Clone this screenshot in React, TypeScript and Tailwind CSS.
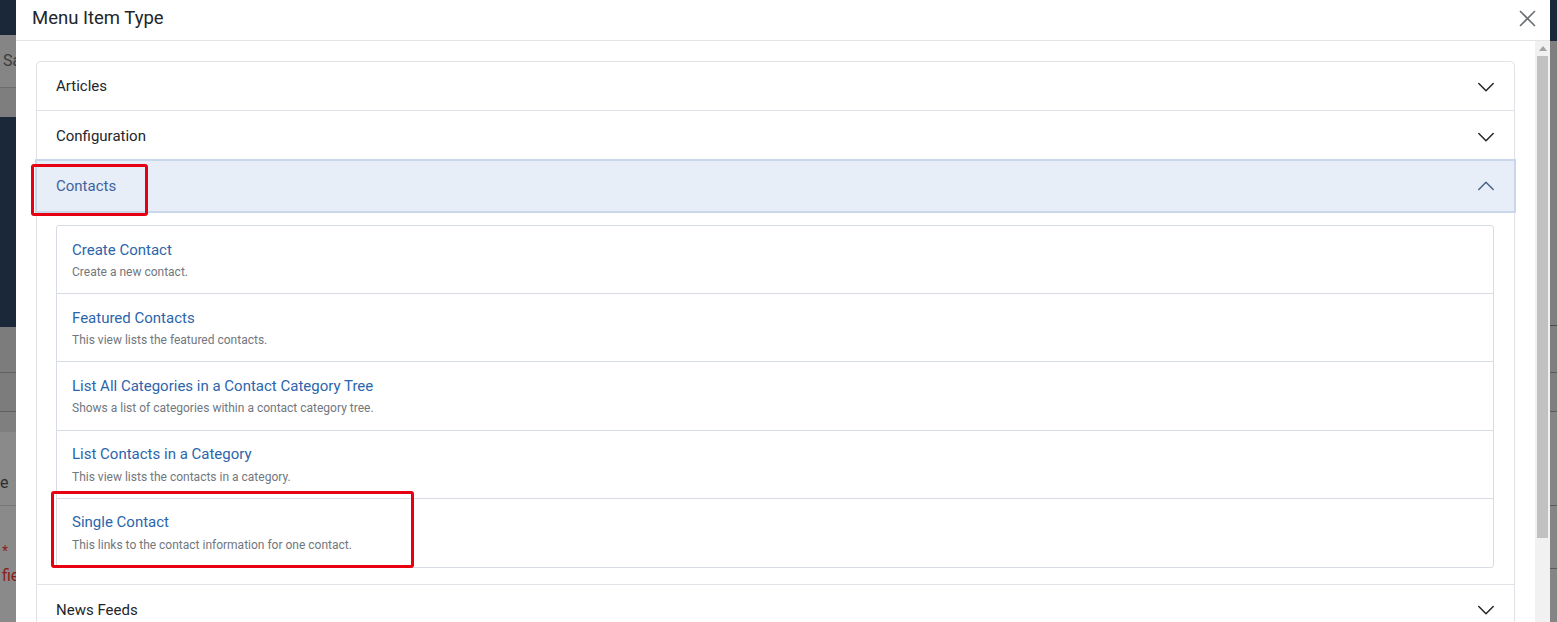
import React from "react";

const Chevron = ({ up = false, color = "#22262a" }: { up?: boolean; color?: string }) => (
  <svg width="16" height="16" viewBox="0 0 16 16" fill="none" className="shrink-0">
    {up ? (
      <polyline points="0.8,11.5 8,4.3 15.2,11.5" stroke={color} strokeWidth="1.5" strokeLinecap="round" strokeLinejoin="round" />
    ) : (
      <polyline points="0.8,4.5 8,11.7 15.2,4.5" stroke={color} strokeWidth="1.5" strokeLinecap="round" strokeLinejoin="round" />
    )}
  </svg>
);

const items = [
  { t: "Create Contact", d: "Create a new contact." },
  { t: "Featured Contacts", d: "This view lists the featured contacts." },
  { t: "List All Categories in a Contact Category Tree", d: "Shows a list of categories within a contact category tree." },
  { t: "List Contacts in a Category", d: "This view lists the contacts in a category." },
  { t: "Single Contact", d: "This links to the contact information for one contact." },
];

export default function App() {
  return (
    <div className="relative w-[1557px] h-[622px] overflow-hidden flex font-['Roboto','Liberation_Sans',sans-serif]">
      {/* left background strip */}
      <div className="w-[16px] shrink-0 flex flex-col text-[16px] leading-none overflow-hidden">
        <div className="h-[35px] bg-[#1b2839]" />
        <div className="h-[53px] bg-[#858585] border-b border-[#6c6c6c] flex items-center pl-[3px] text-[#3b3b3b] whitespace-nowrap">Sa</div>
        <div className="h-[29px] bg-[#7e7e7e]" />
        <div className="h-[210px] bg-[#1b2839]" />
        <div className="h-[46px] bg-[#7c7c7c] border-b border-[#5f5f5f]" />
        <div className="h-[39px] bg-[#7c7c7c] border-b border-[#5f5f5f]" />
        <div className="h-[20px] bg-[#7f7f7f]" />
        <div className="h-[74px] bg-[#8a8a8a] border-b border-[#777] flex items-end pb-[14px] text-[#2e2e2e]">e</div>
        <div className="flex-1 bg-[#8a8a8a] relative text-[#8c1d1d] whitespace-nowrap">
          <div className="absolute left-[2px] top-[38px] text-[14px]">*</div>
          <div className="absolute left-[2px] top-[62px] text-[16px]">fie</div>
        </div>
      </div>

      {/* modal */}
      <div className="w-[1534px] shrink-0 bg-white flex flex-col">
        <div className="h-[41px] shrink-0 border-b border-[#e2e4e6] flex items-center justify-between pl-4 pr-[14px] pb-[4px]">
          <div className="text-[18.5px] text-[#22262a] leading-none">Menu Item Type</div>
          <svg width="17" height="17" viewBox="0 0 17 17">
            <line x1="1" y1="1" x2="16" y2="16" stroke="#6b6e72" strokeWidth="1.6" />
            <line x1="16" y1="1" x2="1" y2="16" stroke="#6b6e72" strokeWidth="1.6" />
          </svg>
        </div>
        <div className="flex flex-1 min-h-0">
          <div className="flex-1 overflow-hidden pt-[20px] pl-[20px] pr-[20px]">
            <div className="border border-[#dfe3e7] rounded-t-[5px] text-[15px] text-[#22262a]">
              <div className="h-[49px] border-b border-[#dfe3e7] flex items-center justify-between pl-[19px] pr-5 pt-px">
                <span>Articles</span>
                <Chevron />
              </div>
              <div className="h-[50px] border-b border-[#dfe3e7] flex items-center justify-between pl-[19px] pr-5 pt-[2px]">
                <span>Configuration</span>
                <Chevron />
              </div>
              <div className="h-[50px] bg-[#e8eef7] shadow-[0_0_0_2px_#cad6ea] flex items-center justify-between pl-[19px] pr-5 text-[#3f62a0]">
                <span>Contacts</span>
                <Chevron up color="#4a6288" />
              </div>
              <div className="pt-[14px] pl-[19px] pr-5 pb-4 border-b border-[#dfe3e7]">
                <div className="border border-[#d6dbe4] rounded-[3px] flex flex-col divide-y divide-[#d6dbe4]">
                  {items.map((it) => (
                    <div key={it.t} className="h-[68.2px] pl-[15px] pt-[12.5px] flex flex-col">
                      <div className="text-[15px] leading-[22px] text-[#2c65ab]">{it.t}</div>
                      <div className="mt-[2.5px] text-[12px] leading-[18px] text-[#71777e]">{it.d}</div>
                    </div>
                  ))}
                </div>
              </div>
              <div className="h-[50px] flex items-center justify-between pl-[19px] pr-5">
                <span>News Feeds</span>
                <Chevron />
              </div>
            </div>
          </div>
          {/* scrollbar */}
          <div className="w-[15px] shrink-0 bg-[#f1f1f1] flex flex-col">
            <div className="h-[15px] flex items-center justify-center">
              <svg width="8" height="5" viewBox="0 0 8 5">
                <polygon points="0,5 4,0 8,5" fill="#a3a3a3" />
              </svg>
            </div>
            <div className="h-[482px] mx-[2px] bg-[#c1c1c1]" />
          </div>
        </div>
      </div>

      {/* right background strip */}
      <div className="w-[7px] shrink-0 flex flex-col">
        <div className="h-[41px] bg-[#1b2839]" />
        <div className="h-[285px] bg-[#7f7f7f] border-b border-[#4a4a4a]" />
        <div className="h-[47px] bg-[#7f7f7f] border-b border-[#5a5a5a]" />
        <div className="h-[39px] bg-[#7f7f7f] border-b border-[#5a5a5a]" />
        <div className="h-[94px] bg-[#858585] border-b border-[#5a5a5a]" />
        <div className="h-[63px] bg-[#858585] border-b border-[#5a5a5a]" />
        <div className="flex-1 bg-[#858585]" />
      </div>

      {/* red annotation boxes */}
      <div className="absolute left-[31px] top-[164px] w-[117px] h-[52px] border-[3px] border-[#e60012] rounded-[3px]" />
      <div className="absolute left-[51px] top-[491px] w-[363px] h-[77px] border-[3px] border-[#e60012] rounded-[3px]" />
    </div>
  );
}
